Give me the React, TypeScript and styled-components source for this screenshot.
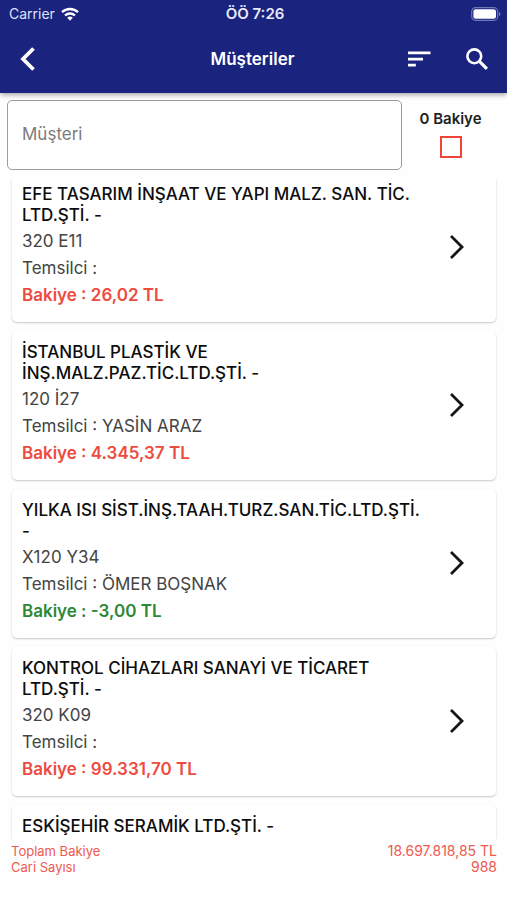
import React, { useState } from "react";
import styled, { createGlobalStyle } from "styled-components";

const GlobalStyle = createGlobalStyle`
  * { box-sizing: border-box; }
  body {
    margin: 0;
    background: #fefefe;
    color: #111;
    font-family: Inter, "Liberation Sans", sans-serif;
  }
  button, input { font: inherit; }
`;

const Screen = styled.div`
  display: flex;
  flex-direction: column;
  height: 100vh;
  overflow: hidden;
`;

const Header = styled.header`
  position: relative;
  flex: none;
  background: #1a237e;
  color: #fff;
  box-shadow: 0 2px 5px rgba(0, 0, 0, 0.35);
`;

const StatusBar = styled.div`
  display: grid;
  grid-template-columns: 1fr auto 1fr;
  align-items: center;
  height: 27px;
  padding: 0 6px 0 9px;
  font-size: 14px;
  line-height: 20px;
`;

const Carrier = styled.div`
  display: flex;
  align-items: center;
  gap: 6px;
  color: #dfe2f8;
`;

const Clock = styled.time`
  font-size: 15px;
  font-weight: 600;
  color: #e8eafa;
`;

const BatterySlot = styled.div`
  display: flex;
  justify-content: flex-end;
`;

const AppBar = styled.div`
  display: grid;
  grid-template-columns: 1fr auto 1fr;
  align-items: center;
  height: 66px;
  padding: 0 10px 2px 8px;
`;

const PageTitle = styled.h1`
  margin: 0;
  font-size: 17px;
  line-height: 24px;
  font-weight: 600;
`;

const Actions = styled.div<{ $end?: boolean }>`
  display: flex;
  gap: 18px;
  justify-content: ${(p) => (p.$end ? "flex-end" : "flex-start")};
`;

const IconButton = styled.button`
  display: flex;
  flex: none;
  align-items: center;
  justify-content: center;
  width: 40px;
  height: 40px;
  padding: 0;
  border: 0;
  background: none;
  color: inherit;
  cursor: pointer;
`;

const Filters = styled.form`
  display: flex;
  flex: none;
  padding: 7px 8px 9px 7px;
`;

const SearchInput = styled.input`
  flex: 1;
  min-width: 0;
  height: 70px;
  padding: 0 14px 2px;
  border: 1px solid #9c9c9c;
  border-radius: 5px;
  background: #fff;
  color: #222;
  font-size: 17px;
  &::placeholder { color: #7c7c7c; opacity: 1; }
`;

const ZeroBalance = styled.label`
  display: flex;
  flex-direction: column;
  align-items: center;
  gap: 7px;
  width: 97px;
  padding-top: 9px;
  font-size: 15px;
  line-height: 20px;
  font-weight: 600;
  color: #222;
`;

const Checkbox = styled.input`
  appearance: none;
  width: 22px;
  height: 22px;
  margin: 0;
  border: 2px solid #ef4438;
  background: #fff;
  &:checked { background: #ef4438; box-shadow: inset 0 0 0 3px #fff; }
`;

const ListViewport = styled.main`
  flex: 1;
  min-height: 0;
  overflow: hidden;
`;

const CustomerList = styled.ul`
  display: flex;
  flex-direction: column;
  gap: 9px;
  margin: -6px 0 0;
  padding: 0 11px 0 12px;
  list-style: none;
`;

const Card = styled.li`
  display: flex;
  align-items: center;
  gap: 12px;
  min-height: 149px;
  padding: 11px 19px 12px 10px;
  border-radius: 5px;
  background: #fff;
  box-shadow: 0 1px 2px rgba(0, 0, 0, 0.22);
`;

const Details = styled.div`
  flex: 1;
  align-self: stretch;
  min-width: 0;
`;

const Name = styled.h2`
  margin: 0 0 2px;
  font-size: 17px;
  line-height: 21px;
  font-weight: 500;
  color: #0d0d0d;
`;

const Line = styled.p`
  margin: 0;
  font-size: 17px;
  line-height: 27px;
  color: #444;
`;

const Balance = styled(Line)<{ $credit: boolean }>`
  font-weight: 600;
  color: ${(p) => (p.$credit ? "#2e8738" : "#ee4b40")};
`;

const Totals = styled.dl`
  flex: none;
  margin: 0;
  padding: 4px 10px 25px 11px;
  line-height: 16px;
  color: #ee5a50;
`;

const TotalRow = styled.div`
  display: flex;
  justify-content: space-between;
`;

const TotalLabel = styled.dt`
  font-size: 13px;
`;

const TotalValue = styled.dd`
  margin: 0;
  font-size: 14px;
`;

type Customer = {
  name: string;
  code: string;
  agent: string;
  balance: string;
  credit?: boolean;
};

const customers: Customer[] = [
  { name: "EFE TASARIM İNŞAAT VE YAPI MALZ. SAN. TİC. LTD.ŞTİ. -", code: "320 E11", agent: "", balance: "26,02" },
  { name: "İSTANBUL PLASTİK VE İNŞ.MALZ.PAZ.TİC.LTD.ŞTİ. -", code: "120 İ27", agent: "YASİN ARAZ", balance: "4.345,37" },
  { name: "YILKA ISI SİST.İNŞ.TAAH.TURZ.SAN.TİC.LTD.ŞTİ. -", code: "X120 Y34", agent: "ÖMER BOŞNAK", balance: "-3,00", credit: true },
  { name: "KONTROL CİHAZLARI SANAYİ VE TİCARET LTD.ŞTİ. -", code: "320 K09", agent: "", balance: "99.331,70" },
];

const WifiIcon = () => (
  <svg width="18" height="14" viewBox="0 0 18 14" aria-hidden="true">
    <g fill="none" stroke="#fff" strokeWidth="2.3">
      <path d="M1 5.2a11.6 11.6 0 0 1 16 0" />
      <path d="M4 8.5a7.2 7.2 0 0 1 10 0" />
    </g>
    <path d="M9 13.7 6.2 10.8a4 4 0 0 1 5.6 0z" fill="#fff" />
  </svg>
);

const BatteryIcon = () => (
  <svg width="30" height="14" viewBox="0 0 30 14" aria-hidden="true">
    <rect x="0.7" y="0.7" width="26" height="12.6" rx="3.8" fill="none" stroke="#7078b5" strokeWidth="1.2" />
    <rect x="2.4" y="2.3" width="22.6" height="9.4" rx="2.3" fill="#fff" />
    <path d="M28 4.8c2 .8 2 3.6 0 4.4z" fill="#7078b5" />
  </svg>
);

const BackIcon = () => (
  <svg width="16" height="26" viewBox="0 0 16 26" fill="none" stroke="currentColor" strokeWidth="3.8" aria-hidden="true">
    <path d="M13.5 2.500 3 13l10.500 10.500" />
  </svg>
);

const SortIcon = () => (
  <svg width="24" height="18" viewBox="0 0 24 18" fill="currentColor" aria-hidden="true">
    <path d="M1 1.5h22.5v2.7H1zM1 7.7h15v2.7H1zM1 13.8h7.800v2.7H1z" />
  </svg>
);

const SearchIcon = () => (
  <svg width="24" height="24" viewBox="0 0 24 24" fill="none" stroke="currentColor" aria-hidden="true">
    <circle cx="9.3" cy="9.3" r="6.9" strokeWidth="2.6" />
    <path d="m14.2 14.2 7.7 7.7" strokeWidth="3.2" />
  </svg>
);

const ChevronIcon = () => (
  <svg width="16" height="26" viewBox="0 0 16 26" fill="none" stroke="#151515" strokeWidth="2.8" aria-hidden="true">
    <path d="m2 2 11 11L2 24" />
  </svg>
);

export default function App() {
  const [query, setQuery] = useState("");
  const [zeroOnly, setZeroOnly] = useState(false);

  return (
    <Screen>
      <GlobalStyle />
      <Header>
        <StatusBar>
          <Carrier>Carrier <WifiIcon /></Carrier>
          <Clock>ÖÖ 7:26</Clock>
          <BatterySlot><BatteryIcon /></BatterySlot>
        </StatusBar>
        <AppBar>
          <Actions>
            <IconButton type="button" aria-label="Geri"><BackIcon /></IconButton>
          </Actions>
          <PageTitle>Müşteriler</PageTitle>
          <Actions $end>
            <IconButton type="button" aria-label="Sırala"><SortIcon /></IconButton>
            <IconButton type="button" aria-label="Ara"><SearchIcon /></IconButton>
          </Actions>
        </AppBar>
      </Header>
      <Filters onSubmit={(e) => e.preventDefault()}>
        <SearchInput
          aria-label="Müşteri"
          placeholder="Müşteri"
          value={query}
          onChange={(e) => setQuery(e.target.value)}
        />
        <ZeroBalance>
          0 Bakiye
          <Checkbox type="checkbox" checked={zeroOnly} onChange={(e) => setZeroOnly(e.target.checked)} />
        </ZeroBalance>
      </Filters>
      <ListViewport>
        <CustomerList>
          {customers.map((c) => (
            <Card key={c.code}>
              <Details>
                <Name>{c.name}</Name>
                <Line>{c.code}</Line>
                <Line>Temsilci : {c.agent}</Line>
                <Balance $credit={!!c.credit}>Bakiye : {c.balance} TL</Balance>
              </Details>
              <IconButton type="button" aria-label={`${c.name} ayrıntı`}><ChevronIcon /></IconButton>
            </Card>
          ))}
          <Card>
            <Details><Name>ESKİŞEHİR SERAMİK LTD.ŞTİ. -</Name></Details>
          </Card>
        </CustomerList>
      </ListViewport>
      <Totals>
        <TotalRow><TotalLabel>Toplam Bakiye</TotalLabel><TotalValue>18.697.818,85 TL</TotalValue></TotalRow>
        <TotalRow><TotalLabel>Cari Sayısı</TotalLabel><TotalValue>988</TotalValue></TotalRow>
      </Totals>
    </Screen>
  );
}
